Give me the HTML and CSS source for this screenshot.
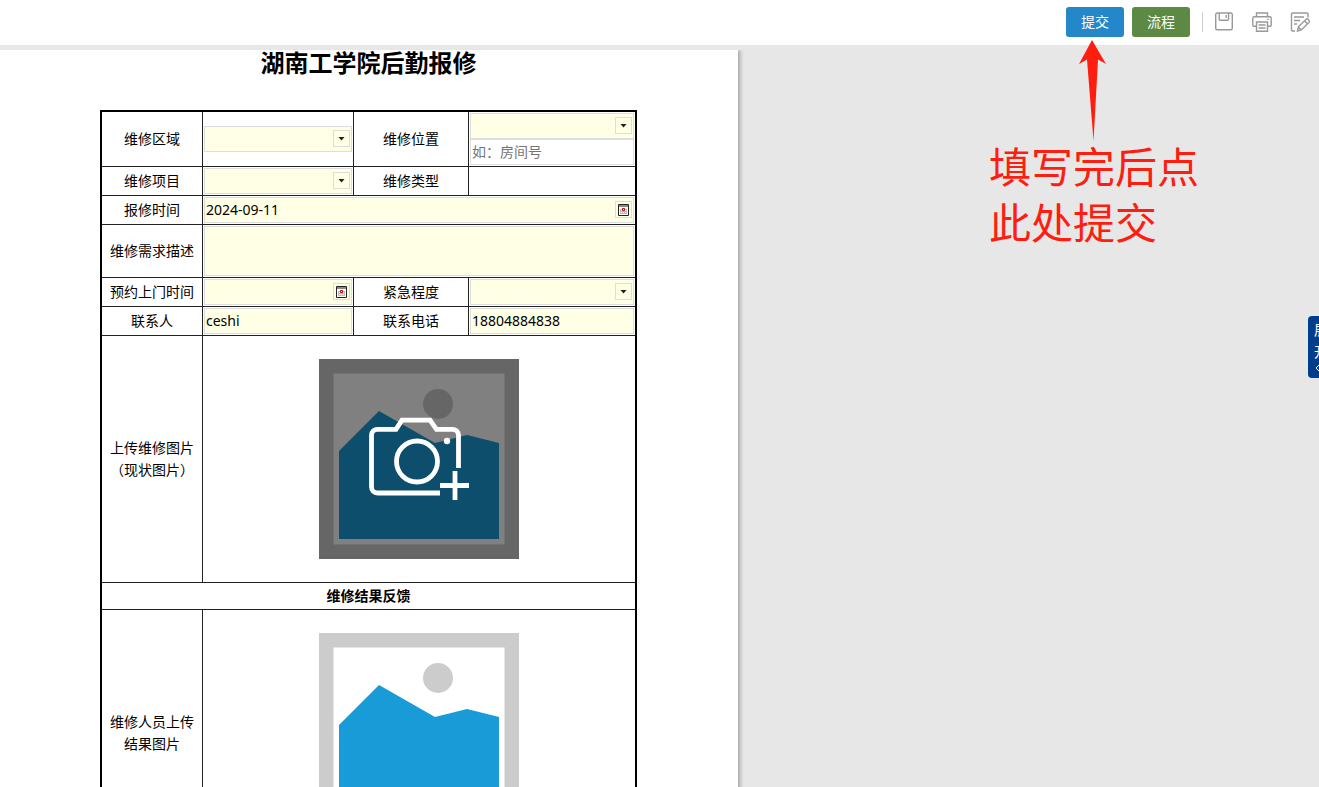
FILE: index.html
```html
<!DOCTYPE html>
<html lang="zh-CN">

<head>
    <meta charset="UTF-8">
    <title>湖南工学院后勤报修</title>
    <link rel="stylesheet" href="styles.css">
</head>

<body>
    <header class="toolbar">
        <button type="submit" form="repair" class="btn btn-submit">提交</button>
        <button type="button" class="btn btn-flow">流程</button>
        <span class="line"></span>
        <button type="button" class="tool" aria-label="保存">
            <svg width="20" height="20" viewBox="0 0 20 20">
                <path d="M3.200 1h13.600a1.500 1.500 0 0 1 1.500 1.500v13.700a1.500 1.500 0 0 1-1.500 1.500H3.200a1.500 1.500 0 0 1-1.500-1.500V2.500A1.500 1.500 0 0 1 3.200 1z" />
                <path d="M5.200 1v6.200a1 1 0 0 0 1 1h7.400a1 1 0 0 0 1-1V1M12.200 3v3" />
            </svg>
        </button>
        <button type="button" class="tool" aria-label="打印">
            <svg width="20" height="20" viewBox="0 0 20 20">
                <path d="M4.500 4.800V1h11v3.800M4.500 14.300H2.200a1.400 1.400 0 0 1-1.400-1.400V6.200a1.400 1.400 0 0 1 1.400-1.400h15.600a1.400 1.400 0 0 1 1.400 1.400v6.700a1.400 1.400 0 0 1-1.400 1.400h-2.300" />
                <path d="M4.500 10h11v9.200h-11zM6.500 13h7M6.500 16h7M14.800 7.400h1.800" />
            </svg>
        </button>
        <button type="button" class="tool" aria-label="批注">
            <svg width="20" height="20" viewBox="0 0 20 20">
                <path d="M18 5.500V2.200A1.200 1.200 0 0 0 16.800 1H2.700A1.200 1.200 0 0 0 1.500 2.200v15.600A1.200 1.200 0 0 0 2.700 19H5M4 5h10M4 8.500h6M4 12h3" />
                <path d="M7.500 19l.8-4.200 8-7.600a1.300 1.300 0 0 1 1.800.1l1 1.100a1.300 1.300 0 0 1 0 1.800l-7.800 7.700zM14.600 8.900l2.900 2.900M8.300 15l3 2.900" />
            </svg>
        </button>
        <!-- 提交提示 -->
        <div class="tip">
            <svg class="tip-arrow" width="28" height="102" viewBox="0 0 28 102">
                <path d="M13 0L27 24l-8-4.500L14.500 101 8 19.500 0 24z" />
            </svg>
            <p>填写完后点<br>此处提交</p>
        </div>
    </header>

    <main class="paper">
        <h1>湖南工学院后勤报修</h1>
        <form id="repair">
            <table class="form-table">
                <colgroup>
                    <col class="c1">
                    <col class="c2">
                    <col class="c3">
                    <col class="c4">
                </colgroup>
                <tr>
                    <th><label for="area">维修区域</label></th>
                    <td>
                        <div class="field">
                            <select id="area"><option></option></select>
                            <span class="icon drop"></span>
                        </div>
                    </td>
                    <th><label for="place">维修位置</label></th>
                    <td>
                        <div class="field">
                            <select id="place"><option></option></select>
                            <span class="icon drop"></span>
                        </div>
                        <div class="field white">
                            <input type="text" aria-label="房间号" placeholder="如：房间号">
                        </div>
                    </td>
                </tr>
                <tr>
                    <th><label for="item">维修项目</label></th>
                    <td>
                        <div class="field">
                            <select id="item"><option></option></select>
                            <span class="icon drop"></span>
                        </div>
                    </td>
                    <th>维修类型</th>
                    <td></td>
                </tr>
                <tr>
                    <th><label for="date">报修时间</label></th>
                    <td colspan="3">
                        <div class="field">
                            <input type="text" id="date" value="2024-09-11">
                            <button type="button" class="icon" aria-label="选择日期">
                                <svg width="11" height="12" viewBox="0 0 11 12">
                                    <path class="cal-box" d="M.5.5h10v11H.5z" />
                                    <path class="cal-head" d="M1 1h9v2H1z" />
                                    <path class="cal-day" d="M2 5h7v1H2zM2 7h7v1H2zM2 9h7v1H2zM2 5h1v5H2zM4 5h1v5H4zM6 5h1v5H6zM8 5h1v5H8z" />
                                    <path class="cal-now" d="M4.500 4.500h2v2h-2z" />
                                </svg>
                            </button>
                        </div>
                    </td>
                </tr>
                <tr>
                    <th><label for="desc">维修需求描述</label></th>
                    <td colspan="3"><textarea id="desc" class="field"></textarea></td>
                </tr>
                <tr>
                    <th><label for="visit">预约上门时间</label></th>
                    <td>
                        <div class="field">
                            <input type="text" id="visit">
                            <button type="button" class="icon" aria-label="选择上门时间">
                                <svg width="11" height="12" viewBox="0 0 11 12">
                                    <path class="cal-box" d="M.5.5h10v11H.5z" />
                                    <path class="cal-head" d="M1 1h9v2H1z" />
                                    <path class="cal-day" d="M2 5h7v1H2zM2 7h7v1H2zM2 9h7v1H2zM2 5h1v5H2zM4 5h1v5H4zM6 5h1v5H6zM8 5h1v5H8z" />
                                    <path class="cal-now" d="M4.500 4.500h2v2h-2z" />
                                </svg>
                            </button>
                        </div>
                    </td>
                    <th><label for="level">紧急程度</label></th>
                    <td>
                        <div class="field">
                            <select id="level"><option></option></select>
                            <span class="icon drop"></span>
                        </div>
                    </td>
                </tr>
                <tr>
                    <th><label for="user">联系人</label></th>
                    <td>
                        <div class="field"><input type="text" id="user" value="ceshi"></div>
                    </td>
                    <th><label for="phone">联系电话</label></th>
                    <td>
                        <div class="field"><input type="text" id="phone" value="18804884838"></div>
                    </td>
                </tr>
                <tr class="photo-row">
                    <th>上传维修图片<br>（现状图片）</th>
                    <td colspan="3">
                        <button type="button" class="photo" aria-label="上传维修图片">
                            <svg width="200" height="200" viewBox="0 0 200 200">
                                <path fill="#666" d="M0 0h200v200H0z" />
                                <path fill="#808080" d="M14.500 14.500h171v171h-171z" />
                                <circle fill="#666" cx="119" cy="45" r="15" />
                                <path fill="#0c4e6b" d="M20 92l40-40 56 32 32-8 32 8v96H20z" />
                                <g fill="none" stroke="#fff" stroke-width="4.800">
                                    <path d="M121 134H58.500a6 6 0 0 1-6-6V76.300a6 6 0 0 1 6-6H77l6-9.100h28l6.500 9.100h16a6 6 0 0 1 6 6V109" />
                                    <circle cx="98" cy="102.500" r="20.500" />
                                    <path d="M121 126.500h29M136 112v29" />
                                </g>
                                <circle fill="#fff" cx="128" cy="82" r="3.200" />
                            </svg>
                        </button>
                    </td>
                </tr>
                <tr class="title-row">
                    <th colspan="4">维修结果反馈</th>
                </tr>
                <tr class="photo-row">
                    <th>维修人员上传<br>结果图片</th>
                    <td colspan="3">
                        <div class="photo">
                            <svg width="200" height="200" viewBox="0 0 200 200">
                                <path fill="#ccc" d="M0 0h200v200H0z" />
                                <path fill="#fff" d="M14.500 14.500h171v171h-171z" />
                                <circle fill="#ccc" cx="119" cy="45" r="15" />
                                <path fill="#189bd6" d="M20 92l40-40 56 32 32-8 32 8v96H20z" />
                            </svg>
                        </div>
                    </td>
                </tr>
            </table>
        </form>
    </main>

    <button type="button" class="side-tab">
        <span>展</span>
        <span>开</span>
        <svg width="8" height="10" viewBox="0 0 8 10">
            <path d="M6 1L2 5l4 4" />
        </svg>
    </button>
</body>

</html>
```
FILE: styles.css
```css
* {
    margin: 0;
    padding: 0;
    box-sizing: border-box;
}

body {
    display: flex;
    flex-direction: column;
    height: 100vh;
    overflow: hidden;
    background: #e7e7e7;
    color: #000;
    font: 14px/22px "Noto Sans", "Noto Sans CJK SC", sans-serif;
}

button,
input,
select,
textarea {
    font: inherit;
    color: inherit;
    border: none;
    outline: none;
    background: none;
}

svg {
    display: block;
}

/* 顶部工具栏 */
.toolbar {
    position: relative;
    display: flex;
    flex-shrink: 0;
    justify-content: flex-end;
    align-items: flex-start;
    height: 45px;
    padding: 7px 9px 0 0;
    margin-bottom: 5px;
    background: #fff;
}

.btn {
    width: 58px;
    height: 30px;
    margin-right: 8px;
    border-radius: 3px;
    color: #fff;
}

.btn-submit {
    background: #2487c9;
}

.btn-flow {
    margin-right: 12px;
    background: #5c8944;
}

.line {
    width: 1px;
    height: 20px;
    margin: 5px 11px 0 0;
    background: #ccc;
}

.tool {
    margin: 5px 0 0 18px;
}

.line + .tool {
    margin-left: 0;
}

.tool path {
    fill: none;
    stroke: #999;
    stroke-width: 1.4;
}

.tip {
    position: absolute;
    top: 40px;
    right: 120px;
    z-index: 2;
    color: #ff1d0f;
    font-size: 42px;
    line-height: 56px;
}

.tip-arrow {
    margin-left: 90px;
    margin-bottom: -3px;
    fill: #ff1d0f;
}

/* 表单 */
.paper {
    flex: 1;
    width: 100%;
    max-width: 738px;
    padding: 0 101px 0 100px;
    background: #fff;
    box-shadow: 2px 0 4px rgba(0, 0, 0, .3);
    clip-path: inset(0 -8px 0 0);
}

.paper h1 {
    margin-bottom: 34px;
    font-size: 24px;
    line-height: 26px;
    text-align: center;
}

.form-table {
    width: 100%;
    table-layout: fixed;
    border: 2px solid #000;
    border-spacing: 0;
}

.c1 {
    width: 101px;
}

.c2 {
    width: 151px;
}

.c3 {
    width: 115px;
}

.form-table th,
.form-table td {
    height: 29px;
    padding: 1px;
    border-right: 1px solid #222;
    border-bottom: 1px solid #222;
    vertical-align: middle;
}

.form-table th {
    font-weight: normal;
}

.form-table tr > :last-child {
    border-right: none;
}

.form-table .photo-row td {
    height: 247px;
}

.form-table .title-row th {
    height: 27px;
    font-weight: bold;
}

.field {
    position: relative;
    display: flex;
    width: 100%;
    height: 26px;
    border: 1px solid #ddd;
    background: #ffffe6;
}

.white {
    background: #fff;
}

textarea.field {
    display: block;
    height: 50px;
    padding: 1px;
    resize: none;
}

.field input,
.field select {
    flex: 1;
    min-width: 0;
    padding: 0 1px;
    appearance: none;
}

.field input::placeholder {
    color: #757575;
}

.icon {
    display: flex;
    flex-shrink: 0;
    justify-content: center;
    align-items: center;
    width: 17px;
    height: 17px;
    margin: 3px 1px 0 0;
    border: 1px solid #ddd;
}

/* 箭头盖在下拉框上面 */
.drop {
    position: absolute;
    top: 0;
    right: 0;
    pointer-events: none;
}

.drop::after {
    content: "";
    width: 7px;
    height: 4px;
    background: #222;
    clip-path: polygon(0 0, 100% 0, 50% 100%);
}

.cal-box {
    fill: #fff;
    stroke: #222;
}

.cal-head {
    fill: #888;
}

.cal-day {
    fill: #bbb;
}

.cal-now {
    fill: #fff;
    stroke: #c00;
}

.photo {
    display: block;
    width: 200px;
    margin: 0 auto;
}

/* 右侧展开条 */
.side-tab {
    position: fixed;
    top: 316px;
    right: -15px;
    width: 26px;
    height: 62px;
    padding: 0 0 2px 6px;
    border-radius: 4px;
    background: #003e8b;
    color: #fff;
    text-align: left;
}

.side-tab span {
    display: block;
}

.side-tab path {
    fill: none;
    stroke: #fff;
}
```
